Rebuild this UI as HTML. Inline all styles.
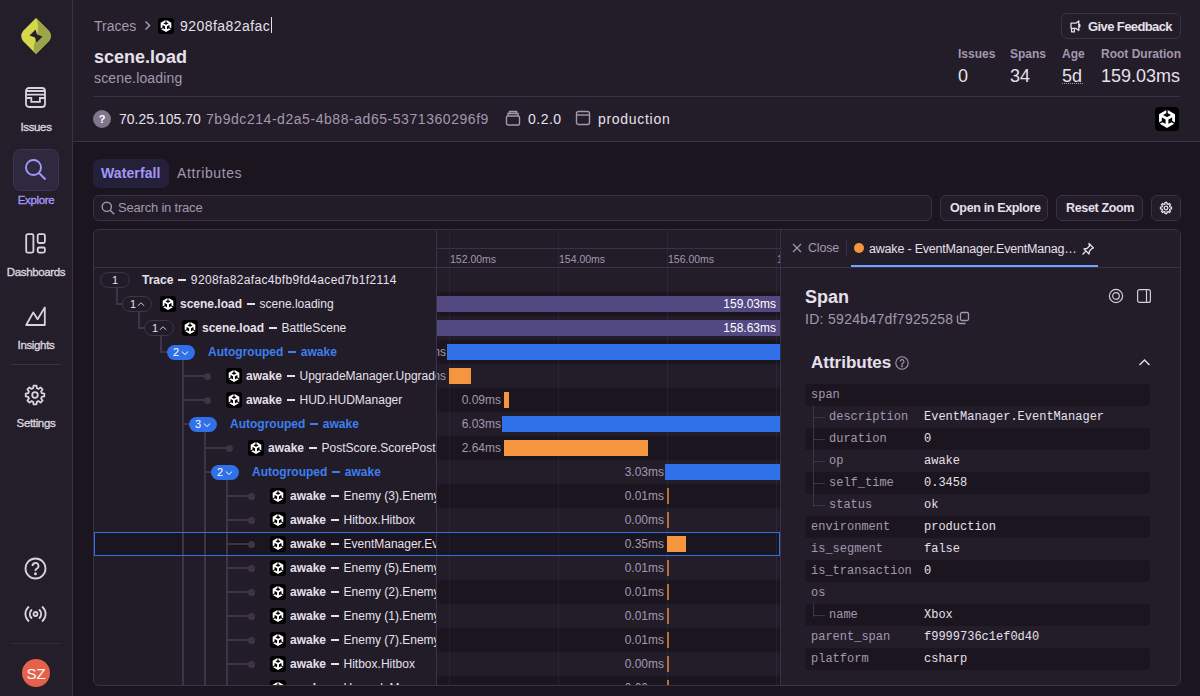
<!DOCTYPE html>
<html><head><meta charset="utf-8"><style>
*{box-sizing:border-box;margin:0;padding:0}
html,body{width:1200px;height:696px;overflow:hidden;background:#1b1520;font-family:"Liberation Sans",sans-serif;color:#ebe6ef}
.abs{position:absolute}
.t{position:absolute;white-space:nowrap;line-height:1}
.mono{font-family:"Liberation Mono",monospace}
</style></head><body>
<div class="abs" style="left:0;top:0;width:73px;height:696px;background:#241e2b;border-right:1px solid #3a3145"></div>
<svg class="abs" style="left:20px;top:17px" width="32" height="38" viewBox="0 0 32 38">
<path d="M16 1 L29 14 Q32.5 19 29 24 L16 37 L3 24 Q-0.5 19 3 14 Z" fill="#d5d84b"/>
<path d="M16 1 L29 14 Q32.5 19 29 24 L16 37 C12.5 33 13.5 28 15.5 23 C17.5 17 19.5 8 16 1 Z" fill="#9da549"/>
<path d="M9.5 18.5 L15.5 12.5 L17 17.5 L22.5 19.5 L16.5 25.5 L15 20.5 Z" fill="#241e2b"/>
</svg>
<svg class="abs" style="left:24px;top:86px" width="23" height="23" viewBox="0 0 23 23" fill="none" stroke="#d9d3df" stroke-width="1.8">
<rect x="2" y="2" width="19" height="19" rx="3"/><path d="M2 5h19M2 8.7h19M2 12h5.3v3.8h8.6V12H21"/></svg>
<div class="t" style="left:0;width:72px;text-align:center;top:122px;font-size:11.5px;font-weight:400;letter-spacing:-0.35px;-webkit-text-stroke:0.35px #d9d3df;color:#d9d3df">Issues</div>
<div class="abs" style="left:13px;top:149px;width:46px;height:42px;border-radius:7px;background:#2f2940;border:1px solid #3a3352"></div>
<svg class="abs" style="left:24px;top:158px" width="23" height="23" viewBox="0 0 23 23" fill="none" stroke="#a397f7" stroke-width="1.9">
<circle cx="9.5" cy="9.5" r="7.5"/><path d="M15 15l6.5 6.5"/></svg>
<div class="t" style="left:0;width:72px;text-align:center;top:195px;font-size:11.5px;font-weight:400;letter-spacing:-0.35px;-webkit-text-stroke:0.35px #a397f7;color:#a397f7">Explore</div>
<svg class="abs" style="left:24px;top:232px" width="23" height="23" viewBox="0 0 23 23" fill="none" stroke="#d9d3df" stroke-width="1.8">
<rect x="2.2" y="2.2" width="7.2" height="18.4" rx="1.5"/><rect x="13.7" y="2.2" width="7.2" height="8.8" rx="1.5"/><rect x="13.7" y="15.5" width="7.2" height="5.1" rx="1.5"/></svg>
<div class="t" style="left:0;width:72px;text-align:center;top:267px;font-size:11.5px;font-weight:400;letter-spacing:-0.35px;-webkit-text-stroke:0.35px #d9d3df;color:#d9d3df">Dashboards</div>
<svg class="abs" style="left:24px;top:304px" width="23" height="23" viewBox="0 0 23 23" fill="none" stroke="#d9d3df" stroke-width="1.8" stroke-linejoin="round">
<path d="M2.2 21L9.3 8.4 13.6 15.2 20.8 3.4V21Z"/></svg>
<div class="t" style="left:0;width:72px;text-align:center;top:340px;font-size:11.5px;font-weight:400;letter-spacing:-0.35px;-webkit-text-stroke:0.35px #d9d3df;color:#d9d3df">Insights</div>
<div class="abs" style="left:11px;top:364px;width:50px;height:1px;background:#3a3145"></div>
<svg class="abs" style="left:24.4px;top:383.5px" width="22" height="22" viewBox="0 0 22 22" fill="none" stroke="#d9d3df" stroke-width="1.8" stroke-linejoin="round">
<path d="M9.19 4.24 L9.53 1.72 L12.47 1.72 L12.81 4.24 L14.50 4.94 L16.53 3.40 L18.60 5.47 L17.06 7.50 L17.76 9.19 L20.28 9.53 L20.28 12.47 L17.76 12.81 L17.06 14.50 L18.60 16.53 L16.53 18.60 L14.50 17.06 L12.81 17.76 L12.47 20.28 L9.53 20.28 L9.19 17.76 L7.50 17.06 L5.47 18.60 L3.40 16.53 L4.94 14.50 L4.24 12.81 L1.72 12.47 L1.72 9.53 L4.24 9.19 L4.94 7.50 L3.40 5.47 L5.47 3.40 L7.50 4.94Z"/><circle cx="11" cy="11" r="2.8"/></svg>
<div class="t" style="left:0;width:72px;text-align:center;top:418px;font-size:11.5px;font-weight:400;letter-spacing:-0.35px;-webkit-text-stroke:0.35px #d9d3df;color:#d9d3df">Settings</div>
<svg class="abs" style="left:24px;top:557px" width="23" height="23" viewBox="0 0 23 23" fill="none" stroke="#d9d3df" stroke-width="1.8">
<circle cx="11.5" cy="11.5" r="10"/><path d="M8.5 9a3 3 0 1 1 4 2.8c-.7.3-1 .8-1 1.5v.8"/><circle cx="11.5" cy="16.8" r=".6" fill="#d9d3df"/></svg>
<svg class="abs" style="left:24px;top:604px" width="23" height="20" viewBox="0 0 23 20" fill="none" stroke="#d9d3df" stroke-width="1.8" stroke-linecap="round">
<circle cx="11.5" cy="10" r="2"/><path d="M7.5 6a5.5 5.5 0 0 0 0 8M15.5 6a5.5 5.5 0 0 1 0 8M4.5 3a9.5 9.5 0 0 0 0 14M18.5 3a9.5 9.5 0 0 1 0 14"/></svg>
<div class="abs" style="left:11px;top:643px;width:50px;height:1px;background:#342c3d"></div>
<div class="abs" style="left:22px;top:659px;width:28px;height:28px;border-radius:50%;background:#e5614a"></div>
<div class="t" style="left:22px;width:28px;text-align:center;top:666px;font-size:15px;color:#fff">SZ</div>
<div class="abs" style="left:73px;top:0;width:1127px;height:142px;background:#231d2a;border-bottom:1px solid #3a3145"></div>
<div class="t" style="left:94px;top:19px;font-size:14px;color:#a398ae;font-weight:400;">Traces</div>
<svg class="abs" style="left:143px;top:20px" width="9" height="11" viewBox="0 0 9 11" fill="none" stroke="#a398ae" stroke-width="1.5"><path d="M2.5 1.5l4 4-4 4"/></svg>
<div class="abs" style="left:158px;top:18px;width:16px;height:16px;background:#000;border-radius:3px"><svg class="abs" style="left:2px;top:2px" width="12" height="12" viewBox="0 0 24 24"><path fill="#fff" d="M12.9288 4.2939l3.7997 2.1929c.1366.077.1415.2905 0 .3675l-4.515 2.6076a.4192.4192 0 0 1-.4246 0L7.274 6.8543c-.139-.0745-.1415-.2904 0-.3675l3.7972-2.193V0L1.3758 5.5977V16.793l3.7177-2.1456v-4.3858c-.0025-.1565.1813-.2682.318-.1838l4.5148 2.6076a.4252.4252 0 0 1 .2136.3676v5.2127c.0025.1565-.1813.2682-.3179.1838l-3.7996-2.1929-3.7178 2.1457L12 24l9.6954-5.5977-3.7178-2.1457-3.7996 2.1929c-.1341.082-.3229-.0248-.3179-.1838V13.0527c0-.159.0844-.2931.2136-.3676l4.5149-2.6076c.1341-.082.3228.0248.3179.1838v4.3858l3.7177 2.1456V5.5977L12.9288 0Z"/></svg></div>
<div class="t" style="left:180px;top:19px;font-size:14px;color:#e6e0ea;font-weight:400;letter-spacing:0.45px">9208fa82afac</div>
<div class="abs" style="left:271px;top:17px;width:1px;height:16px;background:#e6e0ea"></div>
<div class="t" style="left:94px;top:48px;font-size:18px;color:#e6e0ea;font-weight:700;">scene.load</div>
<div class="t" style="left:94px;top:71px;font-size:14px;color:#a398ae;font-weight:400;letter-spacing:0.15px">scene.loading</div>
<div class="abs" style="left:93px;top:96px;width:1087px;height:1px;background:#3a3145"></div>
<div class="abs" style="left:93px;top:110px;width:18px;height:18px;border-radius:50%;background:#807589"></div>
<div class="t" style="left:93px;width:18px;text-align:center;top:114px;font-size:11px;font-weight:700;color:#fff">?</div>
<div class="t" style="left:119px;top:112px;font-size:14px;color:#e6e0ea;font-weight:400;">70.25.105.70</div>
<div class="t" style="left:206px;top:112px;font-size:14px;color:#a398ae;font-weight:400;letter-spacing:0.55px">7b9dc214-d2a5-4b88-ad65-5371360296f9</div>
<svg class="abs" style="left:505px;top:110px" width="16" height="16" viewBox="0 0 16 16" fill="none" stroke="#a398ae" stroke-width="1.4">
<rect x="1.5" y="6" width="13" height="9" rx="1.5"/><path d="M3 6V3.5h10V6M4.5 3.5V1.5h7v2"/></svg>
<div class="t" style="left:528px;top:112px;font-size:14px;color:#e6e0ea;font-weight:400;letter-spacing:0.5px">0.2.0</div>
<svg class="abs" style="left:575px;top:110px" width="16" height="16" viewBox="0 0 16 16" fill="none" stroke="#a398ae" stroke-width="1.4">
<rect x="1.5" y="1.5" width="13" height="13" rx="2"/><path d="M1.5 5h13"/></svg>
<div class="t" style="left:598px;top:112px;font-size:14px;color:#e6e0ea;font-weight:400;letter-spacing:0.7px">production</div>
<div class="abs" style="left:1155px;top:107px;width:24px;height:24px;background:#000;border-radius:4px"><svg class="abs" style="left:3px;top:3px" width="18" height="18" viewBox="0 0 24 24"><path fill="#fff" d="M12.9288 4.2939l3.7997 2.1929c.1366.077.1415.2905 0 .3675l-4.515 2.6076a.4192.4192 0 0 1-.4246 0L7.274 6.8543c-.139-.0745-.1415-.2904 0-.3675l3.7972-2.193V0L1.3758 5.5977V16.793l3.7177-2.1456v-4.3858c-.0025-.1565.1813-.2682.318-.1838l4.5148 2.6076a.4252.4252 0 0 1 .2136.3676v5.2127c.0025.1565-.1813.2682-.3179.1838l-3.7996-2.1929-3.7178 2.1457L12 24l9.6954-5.5977-3.7178-2.1457-3.7996 2.1929c-.1341.082-.3229-.0248-.3179-.1838V13.0527c0-.159.0844-.2931.2136-.3676l4.5149-2.6076c.1341-.082.3228.0248.3179.1838v4.3858l3.7177 2.1456V5.5977L12.9288 0Z"/></svg></div>
<div class="abs" style="left:1061px;top:13px;width:120px;height:26px;border-radius:6px;border:1px solid #3a3145;background:#231d2a"></div>
<svg class="abs" style="left:1069.5px;top:19.5px" width="13" height="13" viewBox="0 0 13 13" fill="none" stroke="#e6e0ea" stroke-width="1.3" stroke-linejoin="round">
<path d="M1 3.2h4.8l3-2.2v9.5l-3-2.2H1z M1.6 8.3v3.6h2.8V8.3 M8.8 4a1.8 1.8 0 0 1 0 3.4"/></svg>
<div class="t" style="left:1088px;top:20px;font-size:13px;color:#e6e0ea;font-weight:700;letter-spacing:-0.6px">Give Feedback</div>
<div class="t" style="left:958px;top:48px;font-size:12px;color:#a398ae;font-weight:700;">Issues</div><div class="t" style="left:958px;top:67px;font-size:18px;color:#e6e0ea;font-weight:400;">0</div>
<div class="t" style="left:1010px;top:48px;font-size:12px;color:#a398ae;font-weight:700;">Spans</div><div class="t" style="left:1010px;top:67px;font-size:18px;color:#e6e0ea;font-weight:400;">34</div>
<div class="t" style="left:1062px;top:48px;font-size:12px;color:#a398ae;font-weight:700;">Age</div><div class="t" style="left:1062px;top:67px;font-size:18px;color:#e6e0ea;font-weight:400;">5d</div>
<div class="abs" style="left:1062px;top:83px;width:21px;height:0;border-top:1px dotted #a398ae"></div>
<div class="t" style="left:1101px;top:48px;font-size:12px;color:#a398ae;font-weight:700;">Root Duration</div><div class="t" style="left:1101px;top:67px;font-size:18px;color:#e6e0ea;font-weight:400;">159.03ms</div>
<div class="abs" style="left:93px;top:159px;width:76px;height:29px;border-radius:7px;background:#252039"></div>
<div class="t" style="left:101px;top:166px;font-size:14px;color:#a397f7;font-weight:700;letter-spacing:0.1px">Waterfall</div>
<div class="t" style="left:177px;top:166px;font-size:14px;color:#a398ae;font-weight:400;letter-spacing:0.6px">Attributes</div>
<div class="abs" style="left:93px;top:195px;width:839px;height:26px;border-radius:6px;border:1px solid #3a3145;background:#221c29"></div>
<svg class="abs" style="left:101px;top:201px" width="14" height="14" viewBox="0 0 14 14" fill="none" stroke="#a398ae" stroke-width="1.4"><circle cx="5.8" cy="5.8" r="4.6"/><path d="M9.2 9.2l4 4"/></svg>
<div class="t" style="left:118px;top:201px;font-size:13px;color:#a398ae;font-weight:400;letter-spacing:-0.2px">Search in trace</div>
<div class="abs" style="left:940px;top:195px;width:108px;height:26px;border-radius:6px;border:1px solid #3a3145;background:#221c29"></div><div class="t" style="left:950px;top:202px;font-size:12.5px;color:#e6e0ea;font-weight:700;letter-spacing:-0.35px">Open in Explore</div>
<div class="abs" style="left:1056px;top:195px;width:87px;height:26px;border-radius:6px;border:1px solid #3a3145;background:#221c29"></div><div class="t" style="left:1066px;top:202px;font-size:12.5px;color:#e6e0ea;font-weight:700;letter-spacing:-0.35px">Reset Zoom</div>
<div class="abs" style="left:1151px;top:195px;width:30px;height:26px;border-radius:6px;border:1px solid #3a3145;background:#221c29"></div>
<svg class="abs" style="left:1159px;top:201px" width="14" height="14" viewBox="0 0 14 14" fill="none" stroke="#e6e0ea" stroke-width="1.3" stroke-linejoin="round"><path d="M5.94 3.04 L6.12 1.47 L7.88 1.47 L8.06 3.04 L9.05 3.45 L10.29 2.47 L11.53 3.71 L10.55 4.95 L10.96 5.94 L12.53 6.12 L12.53 7.88 L10.96 8.06 L10.55 9.05 L11.53 10.29 L10.29 11.53 L9.05 10.55 L8.06 10.96 L7.88 12.53 L6.12 12.53 L5.94 10.96 L4.95 10.55 L3.71 11.53 L2.47 10.29 L3.45 9.05 L3.04 8.06 L1.47 7.88 L1.47 6.12 L3.04 5.94 L3.45 4.95 L2.47 3.71 L3.71 2.47 L4.95 3.45Z"/><circle cx="7" cy="7" r="1.8"/></svg>
<div class="abs" style="left:93px;top:229px;width:1088px;height:457px;border-radius:6px;border:1px solid #3a3145;background:#221c29;overflow:hidden">
<div class="abs" style="left:0;top:37px;width:686px;height:1px;background:#3a3145"></div>
<div class="abs" style="left:342px;top:0;width:1px;height:457px;background:#3a3145"></div>
<div class="abs" style="left:343px;top:18px;width:343px;height:1px;background:#3a3145"></div>
<div class="abs" style="left:343px;top:38px;width:343px;height:418px;overflow:hidden">
<div class="abs" style="left:0;top:0px;width:343px;height:24px;background:#231d2a"></div>
<div class="abs" style="left:0;top:24px;width:343px;height:24px;background:#1b1520"></div>
<div class="abs" style="left:0;top:48px;width:343px;height:24px;background:#231d2a"></div>
<div class="abs" style="left:0;top:72px;width:343px;height:24px;background:#1b1520"></div>
<div class="abs" style="left:0;top:96px;width:343px;height:24px;background:#231d2a"></div>
<div class="abs" style="left:0;top:120px;width:343px;height:24px;background:#1b1520"></div>
<div class="abs" style="left:0;top:144px;width:343px;height:24px;background:#231d2a"></div>
<div class="abs" style="left:0;top:168px;width:343px;height:24px;background:#1b1520"></div>
<div class="abs" style="left:0;top:192px;width:343px;height:24px;background:#231d2a"></div>
<div class="abs" style="left:0;top:216px;width:343px;height:24px;background:#1b1520"></div>
<div class="abs" style="left:0;top:240px;width:343px;height:24px;background:#231d2a"></div>
<div class="abs" style="left:0;top:264px;width:343px;height:24px;background:#1b1520"></div>
<div class="abs" style="left:0;top:288px;width:343px;height:24px;background:#231d2a"></div>
<div class="abs" style="left:0;top:312px;width:343px;height:24px;background:#1b1520"></div>
<div class="abs" style="left:0;top:336px;width:343px;height:24px;background:#231d2a"></div>
<div class="abs" style="left:0;top:360px;width:343px;height:24px;background:#1b1520"></div>
<div class="abs" style="left:0;top:384px;width:343px;height:24px;background:#231d2a"></div>
<div class="abs" style="left:0;top:408px;width:343px;height:24px;background:#1b1520"></div>
</div>
<div class="abs" style="left:355px;top:1px;width:1px;height:455px;background:rgba(160,140,190,0.08)"></div>
<div class="abs" style="left:464px;top:1px;width:1px;height:455px;background:rgba(160,140,190,0.08)"></div>
<div class="abs" style="left:573px;top:1px;width:1px;height:455px;background:rgba(160,140,190,0.08)"></div>
<div class="abs" style="left:682px;top:1px;width:1px;height:455px;background:rgba(160,140,190,0.08)"></div>
<div class="t" style="left:356px;top:24px;font-size:10.5px;color:#a398ae">152.00ms</div>
<div class="t" style="left:465px;top:24px;font-size:10.5px;color:#a398ae">154.00ms</div>
<div class="t" style="left:574px;top:24px;font-size:10.5px;color:#a398ae">156.00ms</div>
<div class="t" style="left:683px;top:24px;font-size:10.5px;color:#a398ae">158.00ms</div>
<div class="abs" style="left:0;top:38px;width:342px;height:418px;overflow:hidden">
<div class="abs" style="left:0;top:264px;width:342px;height:24px;background:#1b1520"></div>
<div class="abs" style="left:22px;top:20px;width:2px;height:17px;background:#3e3448"></div>
<div class="abs" style="left:22px;top:35px;width:8px;height:2px;background:#3e3448"></div>
<div class="abs" style="left:44px;top:44px;width:2px;height:17px;background:#3e3448"></div>
<div class="abs" style="left:44px;top:59px;width:8px;height:2px;background:#3e3448"></div>
<div class="abs" style="left:66px;top:68px;width:2px;height:17px;background:#3e3448"></div>
<div class="abs" style="left:66px;top:83px;width:8px;height:2px;background:#3e3448"></div>
<div class="abs" style="left:88px;top:90px;width:2px;height:328px;background:#3e3448"></div>
<div class="abs" style="left:110px;top:162px;width:2px;height:256px;background:#3e3448"></div>
<div class="abs" style="left:132px;top:210px;width:2px;height:208px;background:#3e3448"></div>
<div class="abs" style="left:88px;top:155px;width:8px;height:2px;background:#3e3448"></div>
<div class="abs" style="left:110px;top:203px;width:8px;height:2px;background:#3e3448"></div>
<div class="abs" style="left:6px;top:4px;width:30px;height:16px;border-radius:8px;border:1px solid #3e3448;background:#221c29"></div>
<div class="t" style="left:6px;width:30px;text-align:center;top:7px;font-size:11px;color:#e6e0ea">1</div>
<div class="t" style="left:48px;top:6px;font-size:12px;color:#e6e0ea"><b>Trace</b><span style="display:inline-block;width:8px;height:1.6px;background:currentColor;vertical-align:3.3px;margin:0 5px 0 4.5px"></span><span style="letter-spacing:.35px">9208fa82afac4bfb9fd4aced7b1f2114</span></div>
<div class="abs" style="left:28px;top:28px;width:30px;height:16px;border-radius:8px;border:1px solid #3e3448;background:#221c29"></div>
<div class="t" style="left:36px;top:31px;font-size:11px;color:#e6e0ea">1</div>
<svg class="abs" style="left:43px;top:33px" width="8" height="6" viewBox="0 0 8 6" fill="none" stroke="#cfc9d5" stroke-width="1"><path d="M0.8 4.8l3.2-3 3.2 3"/></svg>
<div class="abs" style="left:66px;top:28px;width:16px;height:16px;background:#000;border-radius:3px"><svg class="abs" style="left:2px;top:2px" width="12" height="12" viewBox="0 0 24 24"><path fill="#fff" d="M12.9288 4.2939l3.7997 2.1929c.1366.077.1415.2905 0 .3675l-4.515 2.6076a.4192.4192 0 0 1-.4246 0L7.274 6.8543c-.139-.0745-.1415-.2904 0-.3675l3.7972-2.193V0L1.3758 5.5977V16.793l3.7177-2.1456v-4.3858c-.0025-.1565.1813-.2682.318-.1838l4.5148 2.6076a.4252.4252 0 0 1 .2136.3676v5.2127c.0025.1565-.1813.2682-.3179.1838l-3.7996-2.1929-3.7178 2.1457L12 24l9.6954-5.5977-3.7178-2.1457-3.7996 2.1929c-.1341.082-.3229-.0248-.3179-.1838V13.0527c0-.159.0844-.2931.2136-.3676l4.5149-2.6076c.1341-.082.3228.0248.3179.1838v4.3858l3.7177 2.1456V5.5977L12.9288 0Z"/></svg></div>
<div class="t" style="left:86px;top:30px;font-size:12px;color:#e6e0ea"><b>scene.load</b><span style="display:inline-block;width:8px;height:1.6px;background:currentColor;vertical-align:3.3px;margin:0 5px 0 4.5px"></span>scene.loading</div>
<div class="abs" style="left:50px;top:52px;width:30px;height:16px;border-radius:8px;border:1px solid #3e3448;background:#221c29"></div>
<div class="t" style="left:58px;top:55px;font-size:11px;color:#e6e0ea">1</div>
<svg class="abs" style="left:65px;top:57px" width="8" height="6" viewBox="0 0 8 6" fill="none" stroke="#cfc9d5" stroke-width="1"><path d="M0.8 4.8l3.2-3 3.2 3"/></svg>
<div class="abs" style="left:88px;top:52px;width:16px;height:16px;background:#000;border-radius:3px"><svg class="abs" style="left:2px;top:2px" width="12" height="12" viewBox="0 0 24 24"><path fill="#fff" d="M12.9288 4.2939l3.7997 2.1929c.1366.077.1415.2905 0 .3675l-4.515 2.6076a.4192.4192 0 0 1-.4246 0L7.274 6.8543c-.139-.0745-.1415-.2904 0-.3675l3.7972-2.193V0L1.3758 5.5977V16.793l3.7177-2.1456v-4.3858c-.0025-.1565.1813-.2682.318-.1838l4.5148 2.6076a.4252.4252 0 0 1 .2136.3676v5.2127c.0025.1565-.1813.2682-.3179.1838l-3.7996-2.1929-3.7178 2.1457L12 24l9.6954-5.5977-3.7178-2.1457-3.7996 2.1929c-.1341.082-.3229-.0248-.3179-.1838V13.0527c0-.159.0844-.2931.2136-.3676l4.5149-2.6076c.1341-.082.3228.0248.3179.1838v4.3858l3.7177 2.1456V5.5977L12.9288 0Z"/></svg></div>
<div class="t" style="left:108px;top:54px;font-size:12px;color:#e6e0ea"><b>scene.load</b><span style="display:inline-block;width:8px;height:1.6px;background:currentColor;vertical-align:3.3px;margin:0 5px 0 4.5px"></span>BattleScene</div>
<div class="abs" style="left:73px;top:77px;width:28px;height:15px;border-radius:8px;background:#3070e8"></div>
<div class="t" style="left:79px;top:79px;font-size:11px;color:#fff">2</div>
<svg class="abs" style="left:87px;top:82px" width="8" height="6" viewBox="0 0 8 6" fill="none" stroke="#fff" stroke-width="1"><path d="M0.8 1.5l3.2 3 3.2-3"/></svg>
<div class="t" style="left:114px;top:78px;font-size:12px;font-weight:700;color:#3d7ff0">Autogrouped<span style="display:inline-block;width:8px;height:1.6px;background:currentColor;vertical-align:3.3px;margin:0 5px 0 4.5px"></span>awake</div>
<div class="abs" style="left:88px;top:107px;width:24px;height:2px;background:#3e3448"></div>
<div class="abs" style="left:110px;top:105px;width:7px;height:7px;border-radius:50%;background:#3e3448"></div>
<div class="abs" style="left:132px;top:100px;width:16px;height:16px;background:#000;border-radius:3px"><svg class="abs" style="left:2px;top:2px" width="12" height="12" viewBox="0 0 24 24"><path fill="#fff" d="M12.9288 4.2939l3.7997 2.1929c.1366.077.1415.2905 0 .3675l-4.515 2.6076a.4192.4192 0 0 1-.4246 0L7.274 6.8543c-.139-.0745-.1415-.2904 0-.3675l3.7972-2.193V0L1.3758 5.5977V16.793l3.7177-2.1456v-4.3858c-.0025-.1565.1813-.2682.318-.1838l4.5148 2.6076a.4252.4252 0 0 1 .2136.3676v5.2127c.0025.1565-.1813.2682-.3179.1838l-3.7996-2.1929-3.7178 2.1457L12 24l9.6954-5.5977-3.7178-2.1457-3.7996 2.1929c-.1341.082-.3229-.0248-.3179-.1838V13.0527c0-.159.0844-.2931.2136-.3676l4.5149-2.6076c.1341-.082.3228.0248.3179.1838v4.3858l3.7177 2.1456V5.5977L12.9288 0Z"/></svg></div>
<div class="t" style="left:152px;top:102px;font-size:12px;color:#e6e0ea"><b>awake</b><span style="display:inline-block;width:8px;height:1.6px;background:currentColor;vertical-align:3.3px;margin:0 5px 0 4.5px"></span>UpgradeManager.UpgradeManager</div>
<div class="abs" style="left:88px;top:131px;width:24px;height:2px;background:#3e3448"></div>
<div class="abs" style="left:110px;top:129px;width:7px;height:7px;border-radius:50%;background:#3e3448"></div>
<div class="abs" style="left:132px;top:124px;width:16px;height:16px;background:#000;border-radius:3px"><svg class="abs" style="left:2px;top:2px" width="12" height="12" viewBox="0 0 24 24"><path fill="#fff" d="M12.9288 4.2939l3.7997 2.1929c.1366.077.1415.2905 0 .3675l-4.515 2.6076a.4192.4192 0 0 1-.4246 0L7.274 6.8543c-.139-.0745-.1415-.2904 0-.3675l3.7972-2.193V0L1.3758 5.5977V16.793l3.7177-2.1456v-4.3858c-.0025-.1565.1813-.2682.318-.1838l4.5148 2.6076a.4252.4252 0 0 1 .2136.3676v5.2127c.0025.1565-.1813.2682-.3179.1838l-3.7996-2.1929-3.7178 2.1457L12 24l9.6954-5.5977-3.7178-2.1457-3.7996 2.1929c-.1341.082-.3229-.0248-.3179-.1838V13.0527c0-.159.0844-.2931.2136-.3676l4.5149-2.6076c.1341-.082.3228.0248.3179.1838v4.3858l3.7177 2.1456V5.5977L12.9288 0Z"/></svg></div>
<div class="t" style="left:152px;top:126px;font-size:12px;color:#e6e0ea"><b>awake</b><span style="display:inline-block;width:8px;height:1.6px;background:currentColor;vertical-align:3.3px;margin:0 5px 0 4.5px"></span>HUD.HUDManager</div>
<div class="abs" style="left:95px;top:149px;width:28px;height:15px;border-radius:8px;background:#3070e8"></div>
<div class="t" style="left:101px;top:151px;font-size:11px;color:#fff">3</div>
<svg class="abs" style="left:109px;top:154px" width="8" height="6" viewBox="0 0 8 6" fill="none" stroke="#fff" stroke-width="1"><path d="M0.8 1.5l3.2 3 3.2-3"/></svg>
<div class="t" style="left:136px;top:150px;font-size:12px;font-weight:700;color:#3d7ff0">Autogrouped<span style="display:inline-block;width:8px;height:1.6px;background:currentColor;vertical-align:3.3px;margin:0 5px 0 4.5px"></span>awake</div>
<div class="abs" style="left:110px;top:179px;width:24px;height:2px;background:#3e3448"></div>
<div class="abs" style="left:132px;top:177px;width:7px;height:7px;border-radius:50%;background:#3e3448"></div>
<div class="abs" style="left:154px;top:172px;width:16px;height:16px;background:#000;border-radius:3px"><svg class="abs" style="left:2px;top:2px" width="12" height="12" viewBox="0 0 24 24"><path fill="#fff" d="M12.9288 4.2939l3.7997 2.1929c.1366.077.1415.2905 0 .3675l-4.515 2.6076a.4192.4192 0 0 1-.4246 0L7.274 6.8543c-.139-.0745-.1415-.2904 0-.3675l3.7972-2.193V0L1.3758 5.5977V16.793l3.7177-2.1456v-4.3858c-.0025-.1565.1813-.2682.318-.1838l4.5148 2.6076a.4252.4252 0 0 1 .2136.3676v5.2127c.0025.1565-.1813.2682-.3179.1838l-3.7996-2.1929-3.7178 2.1457L12 24l9.6954-5.5977-3.7178-2.1457-3.7996 2.1929c-.1341.082-.3229-.0248-.3179-.1838V13.0527c0-.159.0844-.2931.2136-.3676l4.5149-2.6076c.1341-.082.3228.0248.3179.1838v4.3858l3.7177 2.1456V5.5977L12.9288 0Z"/></svg></div>
<div class="t" style="left:174px;top:174px;font-size:12px;color:#e6e0ea"><b>awake</b><span style="display:inline-block;width:8px;height:1.6px;background:currentColor;vertical-align:3.3px;margin:0 5px 0 4.5px"></span>PostScore.ScorePostScore</div>
<div class="abs" style="left:117px;top:197px;width:28px;height:15px;border-radius:8px;background:#3070e8"></div>
<div class="t" style="left:123px;top:199px;font-size:11px;color:#fff">2</div>
<svg class="abs" style="left:131px;top:202px" width="8" height="6" viewBox="0 0 8 6" fill="none" stroke="#fff" stroke-width="1"><path d="M0.8 1.5l3.2 3 3.2-3"/></svg>
<div class="t" style="left:158px;top:198px;font-size:12px;font-weight:700;color:#3d7ff0">Autogrouped<span style="display:inline-block;width:8px;height:1.6px;background:currentColor;vertical-align:3.3px;margin:0 5px 0 4.5px"></span>awake</div>
<div class="abs" style="left:132px;top:227px;width:24px;height:2px;background:#3e3448"></div>
<div class="abs" style="left:154px;top:225px;width:7px;height:7px;border-radius:50%;background:#3e3448"></div>
<div class="abs" style="left:176px;top:220px;width:16px;height:16px;background:#000;border-radius:3px"><svg class="abs" style="left:2px;top:2px" width="12" height="12" viewBox="0 0 24 24"><path fill="#fff" d="M12.9288 4.2939l3.7997 2.1929c.1366.077.1415.2905 0 .3675l-4.515 2.6076a.4192.4192 0 0 1-.4246 0L7.274 6.8543c-.139-.0745-.1415-.2904 0-.3675l3.7972-2.193V0L1.3758 5.5977V16.793l3.7177-2.1456v-4.3858c-.0025-.1565.1813-.2682.318-.1838l4.5148 2.6076a.4252.4252 0 0 1 .2136.3676v5.2127c.0025.1565-.1813.2682-.3179.1838l-3.7996-2.1929-3.7178 2.1457L12 24l9.6954-5.5977-3.7178-2.1457-3.7996 2.1929c-.1341.082-.3229-.0248-.3179-.1838V13.0527c0-.159.0844-.2931.2136-.3676l4.5149-2.6076c.1341-.082.3228.0248.3179.1838v4.3858l3.7177 2.1456V5.5977L12.9288 0Z"/></svg></div>
<div class="t" style="left:196px;top:222px;font-size:12px;color:#e6e0ea"><b>awake</b><span style="display:inline-block;width:8px;height:1.6px;background:currentColor;vertical-align:3.3px;margin:0 5px 0 4.5px"></span>Enemy (3).Enemy</div>
<div class="abs" style="left:132px;top:251px;width:24px;height:2px;background:#3e3448"></div>
<div class="abs" style="left:154px;top:249px;width:7px;height:7px;border-radius:50%;background:#3e3448"></div>
<div class="abs" style="left:176px;top:244px;width:16px;height:16px;background:#000;border-radius:3px"><svg class="abs" style="left:2px;top:2px" width="12" height="12" viewBox="0 0 24 24"><path fill="#fff" d="M12.9288 4.2939l3.7997 2.1929c.1366.077.1415.2905 0 .3675l-4.515 2.6076a.4192.4192 0 0 1-.4246 0L7.274 6.8543c-.139-.0745-.1415-.2904 0-.3675l3.7972-2.193V0L1.3758 5.5977V16.793l3.7177-2.1456v-4.3858c-.0025-.1565.1813-.2682.318-.1838l4.5148 2.6076a.4252.4252 0 0 1 .2136.3676v5.2127c.0025.1565-.1813.2682-.3179.1838l-3.7996-2.1929-3.7178 2.1457L12 24l9.6954-5.5977-3.7178-2.1457-3.7996 2.1929c-.1341.082-.3229-.0248-.3179-.1838V13.0527c0-.159.0844-.2931.2136-.3676l4.5149-2.6076c.1341-.082.3228.0248.3179.1838v4.3858l3.7177 2.1456V5.5977L12.9288 0Z"/></svg></div>
<div class="t" style="left:196px;top:246px;font-size:12px;color:#e6e0ea"><b>awake</b><span style="display:inline-block;width:8px;height:1.6px;background:currentColor;vertical-align:3.3px;margin:0 5px 0 4.5px"></span>Hitbox.Hitbox</div>
<div class="abs" style="left:132px;top:275px;width:24px;height:2px;background:#3e3448"></div>
<div class="abs" style="left:154px;top:273px;width:7px;height:7px;border-radius:50%;background:#3e3448"></div>
<div class="abs" style="left:176px;top:268px;width:16px;height:16px;background:#000;border-radius:3px"><svg class="abs" style="left:2px;top:2px" width="12" height="12" viewBox="0 0 24 24"><path fill="#fff" d="M12.9288 4.2939l3.7997 2.1929c.1366.077.1415.2905 0 .3675l-4.515 2.6076a.4192.4192 0 0 1-.4246 0L7.274 6.8543c-.139-.0745-.1415-.2904 0-.3675l3.7972-2.193V0L1.3758 5.5977V16.793l3.7177-2.1456v-4.3858c-.0025-.1565.1813-.2682.318-.1838l4.5148 2.6076a.4252.4252 0 0 1 .2136.3676v5.2127c.0025.1565-.1813.2682-.3179.1838l-3.7996-2.1929-3.7178 2.1457L12 24l9.6954-5.5977-3.7178-2.1457-3.7996 2.1929c-.1341.082-.3229-.0248-.3179-.1838V13.0527c0-.159.0844-.2931.2136-.3676l4.5149-2.6076c.1341-.082.3228.0248.3179.1838v4.3858l3.7177 2.1456V5.5977L12.9288 0Z"/></svg></div>
<div class="t" style="left:196px;top:270px;font-size:12px;color:#e6e0ea"><b>awake</b><span style="display:inline-block;width:8px;height:1.6px;background:currentColor;vertical-align:3.3px;margin:0 5px 0 4.5px"></span>EventManager.EventManager</div>
<div class="abs" style="left:132px;top:299px;width:24px;height:2px;background:#3e3448"></div>
<div class="abs" style="left:154px;top:297px;width:7px;height:7px;border-radius:50%;background:#3e3448"></div>
<div class="abs" style="left:176px;top:292px;width:16px;height:16px;background:#000;border-radius:3px"><svg class="abs" style="left:2px;top:2px" width="12" height="12" viewBox="0 0 24 24"><path fill="#fff" d="M12.9288 4.2939l3.7997 2.1929c.1366.077.1415.2905 0 .3675l-4.515 2.6076a.4192.4192 0 0 1-.4246 0L7.274 6.8543c-.139-.0745-.1415-.2904 0-.3675l3.7972-2.193V0L1.3758 5.5977V16.793l3.7177-2.1456v-4.3858c-.0025-.1565.1813-.2682.318-.1838l4.5148 2.6076a.4252.4252 0 0 1 .2136.3676v5.2127c.0025.1565-.1813.2682-.3179.1838l-3.7996-2.1929-3.7178 2.1457L12 24l9.6954-5.5977-3.7178-2.1457-3.7996 2.1929c-.1341.082-.3229-.0248-.3179-.1838V13.0527c0-.159.0844-.2931.2136-.3676l4.5149-2.6076c.1341-.082.3228.0248.3179.1838v4.3858l3.7177 2.1456V5.5977L12.9288 0Z"/></svg></div>
<div class="t" style="left:196px;top:294px;font-size:12px;color:#e6e0ea"><b>awake</b><span style="display:inline-block;width:8px;height:1.6px;background:currentColor;vertical-align:3.3px;margin:0 5px 0 4.5px"></span>Enemy (5).Enemy</div>
<div class="abs" style="left:132px;top:323px;width:24px;height:2px;background:#3e3448"></div>
<div class="abs" style="left:154px;top:321px;width:7px;height:7px;border-radius:50%;background:#3e3448"></div>
<div class="abs" style="left:176px;top:316px;width:16px;height:16px;background:#000;border-radius:3px"><svg class="abs" style="left:2px;top:2px" width="12" height="12" viewBox="0 0 24 24"><path fill="#fff" d="M12.9288 4.2939l3.7997 2.1929c.1366.077.1415.2905 0 .3675l-4.515 2.6076a.4192.4192 0 0 1-.4246 0L7.274 6.8543c-.139-.0745-.1415-.2904 0-.3675l3.7972-2.193V0L1.3758 5.5977V16.793l3.7177-2.1456v-4.3858c-.0025-.1565.1813-.2682.318-.1838l4.5148 2.6076a.4252.4252 0 0 1 .2136.3676v5.2127c.0025.1565-.1813.2682-.3179.1838l-3.7996-2.1929-3.7178 2.1457L12 24l9.6954-5.5977-3.7178-2.1457-3.7996 2.1929c-.1341.082-.3229-.0248-.3179-.1838V13.0527c0-.159.0844-.2931.2136-.3676l4.5149-2.6076c.1341-.082.3228.0248.3179.1838v4.3858l3.7177 2.1456V5.5977L12.9288 0Z"/></svg></div>
<div class="t" style="left:196px;top:318px;font-size:12px;color:#e6e0ea"><b>awake</b><span style="display:inline-block;width:8px;height:1.6px;background:currentColor;vertical-align:3.3px;margin:0 5px 0 4.5px"></span>Enemy (2).Enemy</div>
<div class="abs" style="left:132px;top:347px;width:24px;height:2px;background:#3e3448"></div>
<div class="abs" style="left:154px;top:345px;width:7px;height:7px;border-radius:50%;background:#3e3448"></div>
<div class="abs" style="left:176px;top:340px;width:16px;height:16px;background:#000;border-radius:3px"><svg class="abs" style="left:2px;top:2px" width="12" height="12" viewBox="0 0 24 24"><path fill="#fff" d="M12.9288 4.2939l3.7997 2.1929c.1366.077.1415.2905 0 .3675l-4.515 2.6076a.4192.4192 0 0 1-.4246 0L7.274 6.8543c-.139-.0745-.1415-.2904 0-.3675l3.7972-2.193V0L1.3758 5.5977V16.793l3.7177-2.1456v-4.3858c-.0025-.1565.1813-.2682.318-.1838l4.5148 2.6076a.4252.4252 0 0 1 .2136.3676v5.2127c.0025.1565-.1813.2682-.3179.1838l-3.7996-2.1929-3.7178 2.1457L12 24l9.6954-5.5977-3.7178-2.1457-3.7996 2.1929c-.1341.082-.3229-.0248-.3179-.1838V13.0527c0-.159.0844-.2931.2136-.3676l4.5149-2.6076c.1341-.082.3228.0248.3179.1838v4.3858l3.7177 2.1456V5.5977L12.9288 0Z"/></svg></div>
<div class="t" style="left:196px;top:342px;font-size:12px;color:#e6e0ea"><b>awake</b><span style="display:inline-block;width:8px;height:1.6px;background:currentColor;vertical-align:3.3px;margin:0 5px 0 4.5px"></span>Enemy (1).Enemy</div>
<div class="abs" style="left:132px;top:371px;width:24px;height:2px;background:#3e3448"></div>
<div class="abs" style="left:154px;top:369px;width:7px;height:7px;border-radius:50%;background:#3e3448"></div>
<div class="abs" style="left:176px;top:364px;width:16px;height:16px;background:#000;border-radius:3px"><svg class="abs" style="left:2px;top:2px" width="12" height="12" viewBox="0 0 24 24"><path fill="#fff" d="M12.9288 4.2939l3.7997 2.1929c.1366.077.1415.2905 0 .3675l-4.515 2.6076a.4192.4192 0 0 1-.4246 0L7.274 6.8543c-.139-.0745-.1415-.2904 0-.3675l3.7972-2.193V0L1.3758 5.5977V16.793l3.7177-2.1456v-4.3858c-.0025-.1565.1813-.2682.318-.1838l4.5148 2.6076a.4252.4252 0 0 1 .2136.3676v5.2127c.0025.1565-.1813.2682-.3179.1838l-3.7996-2.1929-3.7178 2.1457L12 24l9.6954-5.5977-3.7178-2.1457-3.7996 2.1929c-.1341.082-.3229-.0248-.3179-.1838V13.0527c0-.159.0844-.2931.2136-.3676l4.5149-2.6076c.1341-.082.3228.0248.3179.1838v4.3858l3.7177 2.1456V5.5977L12.9288 0Z"/></svg></div>
<div class="t" style="left:196px;top:366px;font-size:12px;color:#e6e0ea"><b>awake</b><span style="display:inline-block;width:8px;height:1.6px;background:currentColor;vertical-align:3.3px;margin:0 5px 0 4.5px"></span>Enemy (7).Enemy</div>
<div class="abs" style="left:132px;top:395px;width:24px;height:2px;background:#3e3448"></div>
<div class="abs" style="left:154px;top:393px;width:7px;height:7px;border-radius:50%;background:#3e3448"></div>
<div class="abs" style="left:176px;top:388px;width:16px;height:16px;background:#000;border-radius:3px"><svg class="abs" style="left:2px;top:2px" width="12" height="12" viewBox="0 0 24 24"><path fill="#fff" d="M12.9288 4.2939l3.7997 2.1929c.1366.077.1415.2905 0 .3675l-4.515 2.6076a.4192.4192 0 0 1-.4246 0L7.274 6.8543c-.139-.0745-.1415-.2904 0-.3675l3.7972-2.193V0L1.3758 5.5977V16.793l3.7177-2.1456v-4.3858c-.0025-.1565.1813-.2682.318-.1838l4.5148 2.6076a.4252.4252 0 0 1 .2136.3676v5.2127c.0025.1565-.1813.2682-.3179.1838l-3.7996-2.1929-3.7178 2.1457L12 24l9.6954-5.5977-3.7178-2.1457-3.7996 2.1929c-.1341.082-.3229-.0248-.3179-.1838V13.0527c0-.159.0844-.2931.2136-.3676l4.5149-2.6076c.1341-.082.3228.0248.3179.1838v4.3858l3.7177 2.1456V5.5977L12.9288 0Z"/></svg></div>
<div class="t" style="left:196px;top:390px;font-size:12px;color:#e6e0ea"><b>awake</b><span style="display:inline-block;width:8px;height:1.6px;background:currentColor;vertical-align:3.3px;margin:0 5px 0 4.5px"></span>Hitbox.Hitbox</div>
<div class="abs" style="left:132px;top:419px;width:24px;height:2px;background:#3e3448"></div>
<div class="abs" style="left:154px;top:417px;width:7px;height:7px;border-radius:50%;background:#3e3448"></div>
<div class="abs" style="left:176px;top:412px;width:16px;height:16px;background:#000;border-radius:3px"><svg class="abs" style="left:2px;top:2px" width="12" height="12" viewBox="0 0 24 24"><path fill="#fff" d="M12.9288 4.2939l3.7997 2.1929c.1366.077.1415.2905 0 .3675l-4.515 2.6076a.4192.4192 0 0 1-.4246 0L7.274 6.8543c-.139-.0745-.1415-.2904 0-.3675l3.7972-2.193V0L1.3758 5.5977V16.793l3.7177-2.1456v-4.3858c-.0025-.1565.1813-.2682.318-.1838l4.5148 2.6076a.4252.4252 0 0 1 .2136.3676v5.2127c.0025.1565-.1813.2682-.3179.1838l-3.7996-2.1929-3.7178 2.1457L12 24l9.6954-5.5977-3.7178-2.1457-3.7996 2.1929c-.1341.082-.3229-.0248-.3179-.1838V13.0527c0-.159.0844-.2931.2136-.3676l4.5149-2.6076c.1341-.082.3228.0248.3179.1838v4.3858l3.7177 2.1456V5.5977L12.9288 0Z"/></svg></div>
<div class="t" style="left:196px;top:414px;font-size:12px;color:#e6e0ea"><b>awake</b><span style="display:inline-block;width:8px;height:1.6px;background:currentColor;vertical-align:3.3px;margin:0 5px 0 4.5px"></span>UpgradeManager.UpgradeManager</div>
</div>
<div class="abs" style="left:343px;top:38px;width:343px;height:418px;overflow:hidden">
<div class="abs" style="left:0px;top:28px;width:343px;height:16px;background:#524882"></div>
<div class="t" style="right:4px;top:30px;font-size:12px;color:#fff">159.03ms</div>
<div class="abs" style="left:0px;top:52px;width:343px;height:16px;background:#524882"></div>
<div class="t" style="right:4px;top:54px;font-size:12px;color:#fff">158.63ms</div>
<div class="abs" style="left:10px;top:76px;width:333px;height:16px;background:#3070e8"></div>
<div class="t" style="right:334px;top:78px;font-size:12px;color:#a398ae">13.25ms</div>
<div class="abs" style="left:12px;top:100px;width:22px;height:16px;background:#f5953f"></div>
<div class="t" style="right:334px;top:102px;font-size:12px;color:#a398ae">0.20ms</div>
<div class="abs" style="left:67px;top:124px;width:5px;height:16px;background:#f5953f"></div>
<div class="t" style="right:279px;top:126px;font-size:12px;color:#a398ae">0.09ms</div>
<div class="abs" style="left:65px;top:148px;width:278px;height:16px;background:#3070e8"></div>
<div class="t" style="right:279px;top:150px;font-size:12px;color:#a398ae">6.03ms</div>
<div class="abs" style="left:67px;top:172px;width:144px;height:16px;background:#f5953f"></div>
<div class="t" style="right:279px;top:174px;font-size:12px;color:#a398ae">2.64ms</div>
<div class="abs" style="left:228px;top:196px;width:115px;height:16px;background:#3070e8"></div>
<div class="t" style="right:116px;top:198px;font-size:12px;color:#a398ae">3.03ms</div>
<div class="abs" style="left:230px;top:220px;width:2px;height:16px;background:#b7703c"></div>
<div class="t" style="right:116px;top:222px;font-size:12px;color:#a398ae">0.01ms</div>
<div class="abs" style="left:230px;top:244px;width:2px;height:16px;background:#b7703c"></div>
<div class="t" style="right:116px;top:246px;font-size:12px;color:#a398ae">0.00ms</div>
<div class="abs" style="left:230px;top:268px;width:19px;height:16px;background:#f5953f"></div>
<div class="t" style="right:116px;top:270px;font-size:12px;color:#a398ae">0.35ms</div>
<div class="abs" style="left:230px;top:292px;width:2px;height:16px;background:#b7703c"></div>
<div class="t" style="right:116px;top:294px;font-size:12px;color:#a398ae">0.01ms</div>
<div class="abs" style="left:230px;top:316px;width:2px;height:16px;background:#b7703c"></div>
<div class="t" style="right:116px;top:318px;font-size:12px;color:#a398ae">0.01ms</div>
<div class="abs" style="left:230px;top:340px;width:2px;height:16px;background:#b7703c"></div>
<div class="t" style="right:116px;top:342px;font-size:12px;color:#a398ae">0.01ms</div>
<div class="abs" style="left:230px;top:364px;width:2px;height:16px;background:#b7703c"></div>
<div class="t" style="right:116px;top:366px;font-size:12px;color:#a398ae">0.01ms</div>
<div class="abs" style="left:230px;top:388px;width:2px;height:16px;background:#b7703c"></div>
<div class="t" style="right:116px;top:390px;font-size:12px;color:#a398ae">0.00ms</div>
<div class="abs" style="left:230px;top:412px;width:2px;height:16px;background:#b7703c"></div>
<div class="t" style="right:116px;top:414px;font-size:12px;color:#a398ae">0.00ms</div>
</div>
<div class="abs" style="left:0;top:302px;width:686px;height:24px;border:1px solid #3070e8"></div>
<div class="abs" style="left:686px;top:0;width:401px;height:457px;background:#231d2a;border-left:1px solid #3a3145">
<div class="abs" style="left:0;top:37px;width:401px;height:1px;background:#3a3145"></div>
<svg class="abs" style="left:11px;top:13px" width="10" height="10" viewBox="0 0 10 10" stroke="#a398ae" stroke-width="1.1"><path d="M1 1l8 8M9 1l-8 8"/></svg>
<div class="t" style="left:27px;top:12px;font-size:12.5px;letter-spacing:-0.2px;color:#a398ae">Close</div>
<div class="abs" style="left:65px;top:10px;width:1px;height:16px;background:#3a3145"></div>
<div class="abs" style="left:73px;top:13px;width:10px;height:10px;border-radius:50%;background:#f5953f"></div>
<div class="t" style="left:88px;top:13px;font-size:12.5px;letter-spacing:-0.2px;color:#e6e0ea">awake - EventManager.EventManag…</div>
<svg class="abs" style="left:300px;top:12px" width="14" height="14" viewBox="0 0 14 14" fill="none" stroke="#e6e0ea" stroke-width="1.3" stroke-linejoin="round"><path d="M8 1.5l4.5 4.5-1.5.5-2.5 2.5-.5 3-5-5 3-.5 2.5-2.5z M4.5 9.5l-3 3"/></svg>
<div class="abs" style="left:70px;top:35px;width:247px;height:2px;background:#70a2ff"></div>
<div class="t" style="left:24px;top:58px;font-size:18px;font-weight:700;color:#e6e0ea">Span</div>
<div class="t" style="left:24px;top:82px;font-size:14px;color:#a398ae;letter-spacing:.3px">ID: 5924b47df7925258</div>
<svg class="abs" style="left:175px;top:81px" width="14" height="14" viewBox="0 0 14 14" fill="none" stroke="#a398ae" stroke-width="1.3"><rect x="4.5" y="1.5" width="8" height="8" rx="1.5"/><path d="M9.5 12.5h-6a2 2 0 0 1-2-2v-6"/></svg>
<svg class="abs" style="left:327px;top:58px" width="16" height="16" viewBox="0 0 16 16" fill="none" stroke="#d3cdd9" stroke-width="1.2"><circle cx="8" cy="8" r="6.6"/><circle cx="8" cy="8" r="3.3"/></svg>
<svg class="abs" style="left:355px;top:58px" width="16" height="16" viewBox="0 0 16 16" fill="none" stroke="#d3cdd9" stroke-width="1.2"><rect x="1.6" y="1.6" width="12.8" height="12.8" rx="2"/><path d="M10.5 1.6v12.8"/></svg>
<div class="t" style="left:30px;top:124px;font-size:17px;font-weight:700;color:#e6e0ea">Attributes</div>
<svg class="abs" style="left:114px;top:126px" width="14" height="14" viewBox="0 0 14 14" fill="none" stroke="#a398ae" stroke-width="1.1"><circle cx="7" cy="7" r="6.2"/><path d="M5.2 5.6a1.9 1.9 0 1 1 2.6 1.7c-.5.2-.8.5-.8 1v.6"/><circle cx="7" cy="10.3" r=".4" fill="#a398ae"/></svg>
<svg class="abs" style="left:357px;top:128px" width="13" height="9" viewBox="0 0 13 9" fill="none" stroke="#e6e0ea" stroke-width="1.4"><path d="M1.5 7l5-5 5 5"/></svg>
<div class="abs" style="left:24px;top:154px;width:345px;height:22px;border-radius:4px;background:#1b1520"></div>
<div class="t mono" style="left:30px;top:159px;font-size:12px;color:#a398ae">span</div>
<div class="t mono" style="left:48px;top:181px;font-size:12px;color:#a398ae">description</div>
<div class="t mono" style="left:143px;top:181px;font-size:12px;color:#e6e0ea">EventManager.EventManager</div>
<div class="abs" style="left:32px;top:187px;width:12px;height:1px;background:#3e3448"></div>
<div class="abs" style="left:24px;top:198px;width:345px;height:22px;border-radius:4px;background:#1b1520"></div>
<div class="t mono" style="left:48px;top:203px;font-size:12px;color:#a398ae">duration</div>
<div class="t mono" style="left:143px;top:203px;font-size:12px;color:#e6e0ea">0</div>
<div class="abs" style="left:32px;top:209px;width:12px;height:1px;background:#3e3448"></div>
<div class="t mono" style="left:48px;top:225px;font-size:12px;color:#a398ae">op</div>
<div class="t mono" style="left:143px;top:225px;font-size:12px;color:#e6e0ea">awake</div>
<div class="abs" style="left:32px;top:231px;width:12px;height:1px;background:#3e3448"></div>
<div class="abs" style="left:24px;top:242px;width:345px;height:22px;border-radius:4px;background:#1b1520"></div>
<div class="t mono" style="left:48px;top:247px;font-size:12px;color:#a398ae">self_time</div>
<div class="t mono" style="left:143px;top:247px;font-size:12px;color:#e6e0ea">0.3458</div>
<div class="abs" style="left:32px;top:253px;width:12px;height:1px;background:#3e3448"></div>
<div class="t mono" style="left:48px;top:269px;font-size:12px;color:#a398ae">status</div>
<div class="t mono" style="left:143px;top:269px;font-size:12px;color:#e6e0ea">ok</div>
<div class="abs" style="left:32px;top:275px;width:12px;height:1px;background:#3e3448"></div>
<div class="abs" style="left:24px;top:286px;width:345px;height:22px;border-radius:4px;background:#1b1520"></div>
<div class="t mono" style="left:30px;top:291px;font-size:12px;color:#a398ae">environment</div>
<div class="t mono" style="left:143px;top:291px;font-size:12px;color:#e6e0ea">production</div>
<div class="t mono" style="left:30px;top:313px;font-size:12px;color:#a398ae">is_segment</div>
<div class="t mono" style="left:143px;top:313px;font-size:12px;color:#e6e0ea">false</div>
<div class="abs" style="left:24px;top:330px;width:345px;height:22px;border-radius:4px;background:#1b1520"></div>
<div class="t mono" style="left:30px;top:335px;font-size:12px;color:#a398ae">is_transaction</div>
<div class="t mono" style="left:143px;top:335px;font-size:12px;color:#e6e0ea">0</div>
<div class="t mono" style="left:30px;top:357px;font-size:12px;color:#a398ae">os</div>
<div class="abs" style="left:24px;top:374px;width:345px;height:22px;border-radius:4px;background:#1b1520"></div>
<div class="t mono" style="left:48px;top:379px;font-size:12px;color:#a398ae">name</div>
<div class="t mono" style="left:143px;top:379px;font-size:12px;color:#e6e0ea">Xbox</div>
<div class="abs" style="left:32px;top:385px;width:12px;height:1px;background:#3e3448"></div>
<div class="t mono" style="left:30px;top:401px;font-size:12px;color:#a398ae">parent_span</div>
<div class="t mono" style="left:143px;top:401px;font-size:12px;color:#e6e0ea">f9999736c1ef0d40</div>
<div class="abs" style="left:24px;top:418px;width:345px;height:22px;border-radius:4px;background:#1b1520"></div>
<div class="t mono" style="left:30px;top:423px;font-size:12px;color:#a398ae">platform</div>
<div class="t mono" style="left:143px;top:423px;font-size:12px;color:#e6e0ea">csharp</div>
<div class="abs" style="left:32px;top:176px;width:1px;height:101px;background:#3e3448"></div>
<div class="abs" style="left:32px;top:374px;width:1px;height:13px;background:#3e3448"></div>
</div>
</div>
</body></html>
